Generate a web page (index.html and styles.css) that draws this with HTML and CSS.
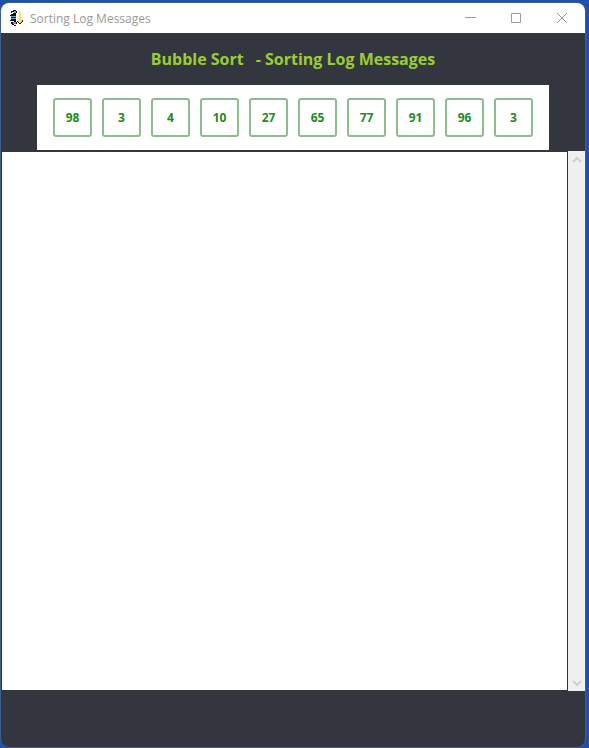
FILE: index.html
```html
<!DOCTYPE html>
<html lang="en">
<head>
<meta charset="utf-8">
<title>Sorting Log Messages</title>
<link rel="stylesheet" href="styles.css">
</head>
<body>
<main class="window">
  <header class="titlebar">
    <svg class="app-icon" viewBox="0 0 16 16" aria-hidden="true" shape-rendering="crispEdges">
      <path fill="#111" d="M4 0h3v1H4zM2 1h3v1H2zM7 1h1v2H7zM2 2h1v1H2zM4 3h3v1H4zM2 4h5v2H2zM1 5h1v1H1zM2 7h5v1H2zM2 9h5v2H2zM1 10h1v1H1zM2 12h2v2H2zM5 11h2v1H5zM7 12h1v2H7zM3 14h1v1H3zM5 15h2v1H5zM4 14h1v1H4zM8 11h1v1H8zM9 12h1v1H9zM10 13h2v1h-2zM12 12h1v1h-1zM13 10h1v2h-1z"/>
      <path fill="#3fc48c" d="M5 1h2v2H5z"/>
      <path fill="#5aa7e0" d="M2 6h5v1H2zM2 8h5v1H2z"/>
      <path fill="#ec5a94" d="M4 12h3v2H4z"/>
      <path fill="#ffdc60" d="M10 1h2v9h1v2h-1v1h-2v-1H9v-2h1z"/>
    </svg>
    <span class="caption">Sorting Log Messages</span>
    <div class="controls">
      <button type="button" aria-label="Minimize"><svg viewBox="0 0 12 12"><path d="M1 5.500h11"/></svg></button>
      <button type="button" aria-label="Maximize"><svg viewBox="0 0 12 12"><rect x="1.500" y="1.500" width="9" height="9" rx="0.500"/></svg></button>
      <button type="button" aria-label="Close"><svg viewBox="0 0 12 12"><path d="M1 1l10 10M11 1L1 11"/></svg></button>
    </div>
  </header>
  <h1 class="heading"><span>Bubble Sort</span><span>- Sorting Log Messages</span></h1>
  <ol class="values">
    <li>98</li><li>3</li><li>4</li><li>10</li><li>27</li><li>65</li><li>77</li><li>91</li><li>96</li><li>3</li>
  </ol>
  <section class="log">
    <textarea class="log-text" aria-label="Log messages" readonly></textarea>
    <div class="scrollbar">
      <button type="button" aria-label="Scroll up"><svg viewBox="0 0 10 6"><path d="M1 5l4-4 4 4"/></svg></button>
      <button type="button" aria-label="Scroll down"><svg viewBox="0 0 10 6"><path d="M1 1l4 4 4-4"/></svg></button>
    </div>
  </section>
</main>
</body>
</html>
```
FILE: styles.css
```css
* {
  box-sizing: border-box;
}

body {
  margin: 0;
  padding: 2px 3px 0 0;
  height: 100vh;
  background: #1d52ab;
  font-family: "Open Sans", "Noto Sans", sans-serif;
}

button {
  display: flex;
  align-items: center;
  justify-content: center;
  padding: 0;
  border: 0;
  background: none;
}

svg {
  fill: none;
}

.window {
  display: flex;
  flex-direction: column;
  height: 100%;
  padding-bottom: 56px;
  border: 1px solid #3f5f94;
  border-radius: 9px;
  overflow: hidden;
  background: #33363e;
}

.titlebar {
  display: flex;
  flex: none;
  align-items: center;
  height: 30px;
  padding-left: 8px;
  background: #fff;
}

.app-icon {
  width: 16px;
  height: 16px;
  margin-right: 5px;
}

.caption {
  color: #999;
  font-size: 12px;
}

.controls {
  display: flex;
  margin-left: auto;
}

.controls button {
  width: 46px;
  height: 30px;
}

.controls svg {
  width: 12px;
  height: 12px;
  stroke: #999;
}

.heading {
  display: flex;
  justify-content: center;
  gap: 12px;
  margin: 0;
  padding: 14px 0;
  color: #9acd32;
  font-size: 16px;
  font-weight: 700;
  line-height: 24px;
}

.values {
  display: flex;
  align-self: center;
  gap: 10px;
  margin: 0 0 1px;
  padding: 13px 16px;
  background: #fff;
  list-style: none;
}

.values li {
  display: flex;
  align-items: center;
  justify-content: center;
  width: 39px;
  height: 39px;
  border: 2px solid #8fbc8f;
  border-radius: 3px;
  color: #228b22;
  font-size: 12px;
  font-weight: 700;
}

.log {
  display: flex;
  flex: 1;
}

.log-text {
  flex: 1;
  min-width: 0;
  margin: 1px;
  border: 0;
  outline: 0;
  background: #fff;
  resize: none;
}

.scrollbar {
  display: flex;
  flex-direction: column;
  justify-content: space-between;
  width: 17px;
  background: #f0f0f0;
}

.scrollbar button {
  width: 17px;
  height: 17px;
}

.scrollbar svg {
  width: 10px;
  height: 6px;
  stroke: #d0d0d0;
  stroke-width: 2;
}
```
